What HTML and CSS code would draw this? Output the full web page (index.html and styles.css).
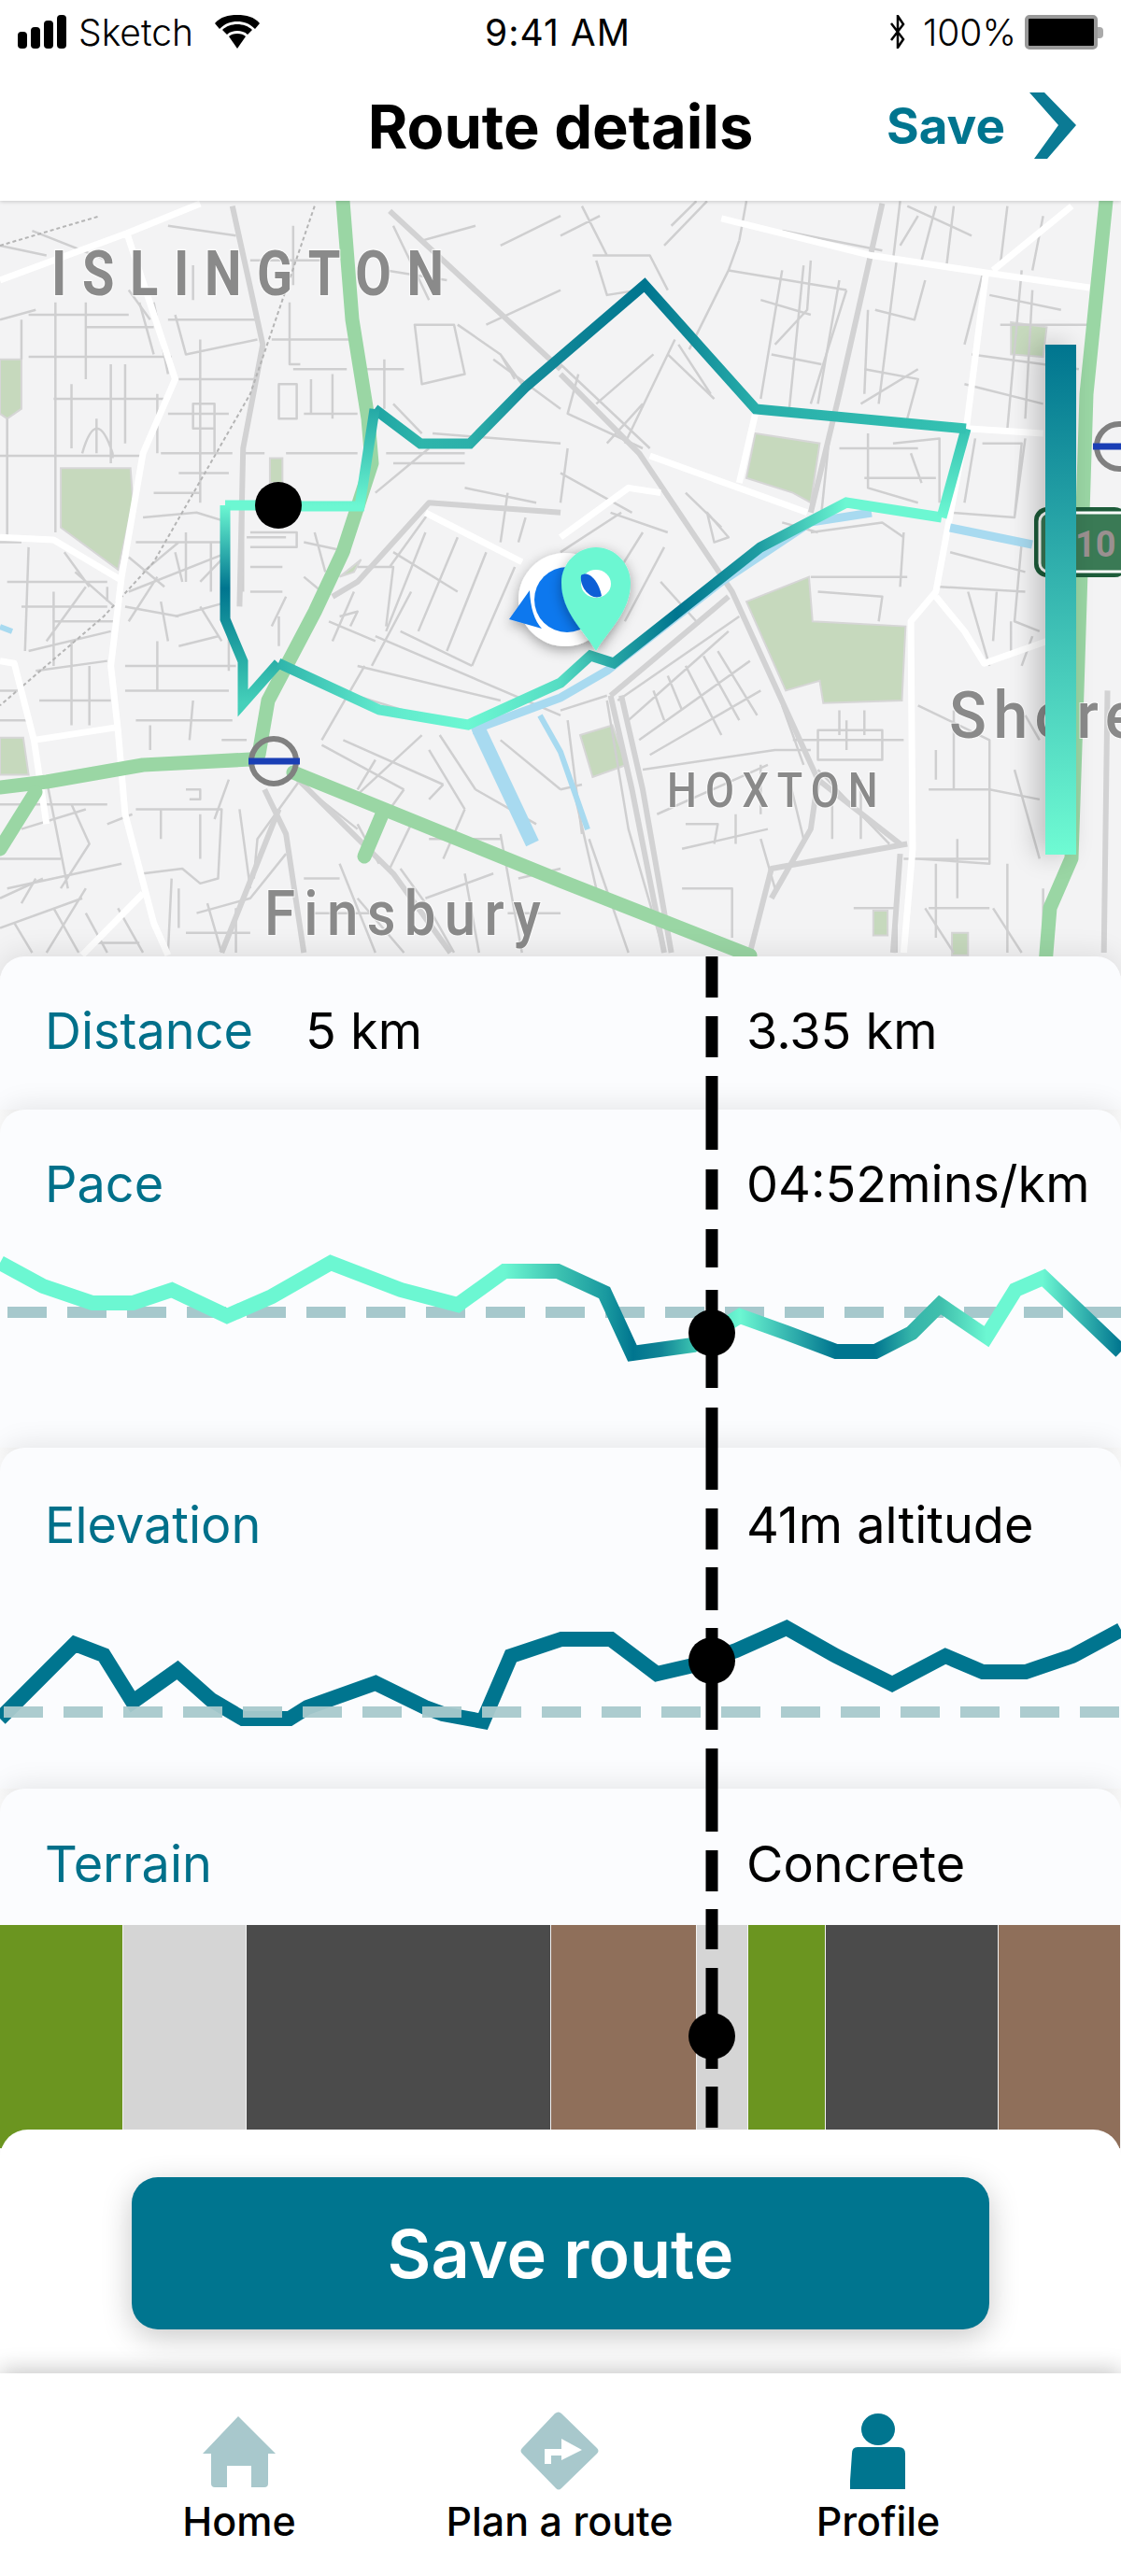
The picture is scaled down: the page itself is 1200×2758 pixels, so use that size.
FILE: index.html
```html
<!DOCTYPE html>
<html lang="en">
<head>
<meta charset="utf-8">
<title>Route details</title>
<link rel="stylesheet" href="styles.css">
</head>
<body>
<div class="screen">
  <header class="top">
    <div class="status">
      <div class="status-left">
        <div class="signal"><i class="b1"></i><i class="b2"></i><i class="b3"></i><i class="b4"></i></div>
        <span>Sketch</span>
        <svg class="wifi" viewBox="0 0 48 36"><path d="M0 9C6 2 14 0 24 0s18 2 24 9l-5 6C37 9 31 7 24 7S11 9 5 15z"/><path d="M8 16c4-4 10-6 16-6s12 2 16 6l-5 5c-3-3-7-4-11-4s-8 1-11 4z"/><path d="M15 23c2-2 5-3 9-3s7 1 9 3l-9 13z"/></svg>
      </div>
      <div class="status-mid">9:41 AM</div>
      <div class="status-right">
        <svg class="bt" viewBox="0 0 18 36"><path d="M2 9l13 17-6 9V1l6 9L2 27"/></svg>
        <span>100%</span>
        <div class="battery"><i></i></div>
      </div>
    </div>
    <div class="navbar">
      <div></div>
      <h1>Route details</h1>
      <div class="save">
        <span>Save</span>
        <svg class="chev" viewBox="0 0 50 72"><polygon points="0,0 16,0 50,35 19,71 5,71 31,35"/></svg>
      </div>
    </div>
  </header>

  <section class="map">
    <svg class="map-svg" viewBox="0 215 1200 830">
      <defs>
        <linearGradient id="gV1" gradientUnits="userSpaceOnUse" x1="0" y1="541" x2="0" y2="753">
          <stop offset="0" stop-color="#6cf7d2"/><stop offset=".42" stop-color="#00758f"/><stop offset=".8" stop-color="#2bb1a8"/><stop offset="1" stop-color="#45d0ba"/>
        </linearGradient>
        <linearGradient id="gH1" gradientUnits="userSpaceOnUse" x1="298" y1="0" x2="1008" y2="0">
          <stop offset="0" stop-color="#2fb5ab"/><stop offset=".15" stop-color="#5fe8cc"/><stop offset=".285" stop-color="#6cf7d2"/><stop offset=".425" stop-color="#55dcc3"/><stop offset=".5" stop-color="#28a8a6"/><stop offset=".6" stop-color="#00758f"/><stop offset=".725" stop-color="#1f9da2"/><stop offset=".855" stop-color="#6cf7d2"/><stop offset="1" stop-color="#6cf7d2"/>
        </linearGradient>
        <linearGradient id="gV2" gradientUnits="userSpaceOnUse" x1="0" y1="554" x2="0" y2="459">
          <stop offset="0" stop-color="#6cf7d2"/><stop offset="1" stop-color="#35c2b2"/>
        </linearGradient>
        <linearGradient id="gH2" gradientUnits="userSpaceOnUse" x1="401" y1="0" x2="1034" y2="0">
          <stop offset="0" stop-color="#1fa4a3"/><stop offset=".08" stop-color="#2eb5ab"/><stop offset=".16" stop-color="#2cb0aa"/><stop offset=".26" stop-color="#158c9a"/><stop offset=".457" stop-color="#00758f"/><stop offset=".645" stop-color="#28aeaa"/><stop offset="1" stop-color="#35c2b2"/>
        </linearGradient>
        <linearGradient id="gV3" gradientUnits="userSpaceOnUse" x1="0" y1="438" x2="0" y2="542">
          <stop offset="0" stop-color="#25a9a6"/><stop offset="1" stop-color="#6cf7d2"/>
        </linearGradient>
        <filter id="soft" x="-30%" y="-30%" width="160%" height="160%"><feDropShadow dx="0" dy="4" stdDeviation="7" flood-color="#000" flood-opacity=".35"/></filter>
      </defs>

      <rect class="ground" x="0" y="215" width="1200" height="830"/>

      <!-- left half, drawn in a 1568-wide sketch grid -->
      <g transform="translate(0 210) scale(.3827 .5294)">
        <path class="park" d="M170 550H365L372 620 330 755 170 670Z"/>
        <path class="park" d="M0 330H60V430L20 450 0 440Z"/>
        <path class="park" d="M0 1095H65L80 1170H0Z"/>
        <path class="park" d="M755 530H790V580H755Z"/>
        <path class="park" d="M950 770L1010 735 990 760Z"/>
        <path class="street" d="M155 215V680M80 325H480M150 410H460M20 450V690M0 525H400M230 520Q270 420 315 520V530M240 215V370M310 340V540M80 240H360M240 265H430M430 215L470 360M470 250H720M490 240L520 320 720 290M500 370H720M560 290V620M540 420H600V470H540ZM450 520H650M760 290H980M810 215V340H840M780 380H830V450H780ZM870 370V440M930 360V450M850 440H1000M820 350H970M680 520H740M800 520H1000M1075 330V430M1000 350H1130M1160 260H1270L1300 360 1180 380ZM1280 260L1400 320 1470 390M1100 420L1180 480M1080 520H1300M1360 260L1568 190M1400 100L1568 40M1180 90L1330 60M1080 150L1250 170M1100 60L1200 210M1380 330L1568 430M1400 320L1440 370M540 140V210M700 130H900M470 60L660 80M820 60V180M90 70L300 130M0 100L130 120M360 190L420 250"/>
        <path class="street" d="M0 700H60M80 710L70 920M150 800V950M240 790L130 900M20 780H300M60 830H300M150 860H330M80 920L310 880M180 720L250 790M300 790V820M210 760L320 830M440 770L360 860M350 830L500 850M490 850L640 820M510 780L490 720M640 720L360 800M690 690H800M700 750H790M850 700L980 720M880 680L910 760M780 850V910M640 720L560 780M350 1000H640M350 950H660M440 900L440 1000M620 1000L520 1000M380 1060H650M420 1070V1120M540 1020L530 1100M620 1100H690M350 1150H700M520 1200H560V1220H530M380 1240H620L610 1380 560 1390 510 1360 400 1370M200 1230L250 1310 170 1400M0 1230H300M60 1280L240 1240M130 1180L190 1400M0 1340L170 1340M20 1400L340 1350M100 1380L60 1430M0 1480L230 1420M270 1510H390M330 1440L400 1530M130 1530L240 1400"/>
        <path class="street" d="M990 800L930 900M1000 750H1100L1080 870M1090 750L1200 640M920 860L1050 900M1100 720L1280 800M1190 680L1080 880M1280 690L1170 880M1360 720L1250 920M1440 750L1320 950M1050 890L1568 1050M1000 950L1400 1020M1120 880L1320 950M950 1000L1130 1040M1020 950L900 1100M1150 800L1040 950M1180 1090L1000 1210M900 1110L1130 1200M960 1100L1240 1190M1230 1090L1330 1200M1050 1140L1000 1200M1240 1190L1200 1220M1200 1120L1300 1240M1330 1200L1500 1270M1300 1240L1240 1340M1130 1200L1080 1250M1150 1270L1090 1360M1380 1370L1190 1420M1400 1290L1460 1530M1300 1370L1340 1530M1000 1270L1060 1350M860 1200L1000 1280M840 1180L720 1300 710 1380M640 1180L600 1260M480 1380L470 1530M550 1450L700 1420 800 1330M1120 1360L1200 1440 1270 1530M660 1440V1530M520 1490H700"/>
        <path class="street" d="M0 250L100 230M60 250V330M390 215L430 320M200 380V510M350 340V500M270 450V520M440 400V520M470 440H640M600 470V520M500 560H640M430 600H560M400 650L550 640 640 660M380 700H640M400 760L500 700M520 680V780M590 700V800M360 730L460 790M450 820L470 900M560 830L620 900M500 910L610 890M640 850V960M700 680H830V710H700M700 800H790M760 870L800 810M680 600V800M950 850L1000 840 980 870M850 770L900 800M1050 600L1200 510M1100 540H1300M1300 590L1500 620M1420 600L1400 700M1470 650L1450 700M1210 480L1568 500M1400 1100L1568 1200M1450 1380L1568 1360M1420 1450H1568M1200 1300H1400M950 1350L1050 1530M850 1380H950M880 1450H1040M1000 1420L1130 1530M0 1420L120 1380M240 1450L300 1530M560 1250V1340M450 1240V1300M670 1240L700 1400M580 1430L620 1530M500 1400V1480M300 1270L370 1250M150 1440L220 1530M40 1470L90 1530M0 1000H50M100 960L300 940M110 1020H310M200 900V1070M250 950V1070M0 1060H80"/>
        <path class="road-grey" d="M650 20L735 300 680 510 670 830M1090 30L1568 350M1568 640L1200 620 1000 780 930 810M740 1200L800 1290 850 1530M820 1170L1100 1370 1260 1530M780 1240L620 1530"/>
        <path class="rail" d="M880 20L700 400 430 740 290 850 0 1030M0 100L280 40"/>
        <path class="road" d="M0 170L355 75 560 15M355 75L490 370 400 520 340 770 310 950 330 1080 350 1250 430 1470 470 1535M0 690L150 695 335 775M0 940L40 945 95 1100 130 1270M95 1100L320 1075M1190 640L1460 740M230 1535L400 1410"/>
      </g>

      <!-- right half -->
      <g transform="translate(600 210) scale(.3827 .5294)">
        <path class="park" d="M545 480L725 500 700 620 650 600 520 570Z"/>
        <path class="park" d="M520 820L695 770 705 860 965 870 955 1020 735 1025 725 980 630 1000Z"/>
        <path class="park" d="M55 1090L145 1070 185 1150 90 1175Z"/>
        <path class="park" d="M1260 255L1360 265 1350 325 1260 320Z"/>
        <path class="park" d="M875 1445H915V1495H875Z"/>
        <path class="park" d="M1095 1490H1140V1535H1095Z"/>
        <path class="street" d="M90 120L250 120 300 190M100 130L130 200 220 190M0 80L110 40M60 20L130 120M310 60L380 10M410 10L290 100M500 90L470 150 800 190M470 150L360 310M800 190L700 420M700 130L690 230 600 300M940 130L890 420M970 20L1150 80M1000 40L950 100M1020 170L990 250 880 230M850 350L1000 370 970 450M840 420L1000 350M1130 300L1180 160M0 340L250 510M50 360L20 440 230 510M100 420L260 320M180 500L320 290M230 420L130 500M300 320L430 410M330 300L420 400M1290 150L1250 470M1200 200L1400 230M1230 260H1480M1150 320L1450 350M1130 380L1350 420M1160 490L1130 620M1180 500H1290L1270 650 1090 640M1300 490L1270 650"/>
        <path class="street" d="M750 500L730 640M780 510H1000M860 480V590L1000 620M930 500L1060 490V620M980 520L1010 580M850 570H1050M0 720L170 640M100 830L230 680M180 860L290 710M280 780L380 860M0 560L200 640M20 510L0 620M140 640L300 680M410 640L470 690 430 700ZM350 600L450 670M620 660L720 680M700 680L900 660 960 690M700 770H970M720 800L900 810 890 860M960 680L950 790M1090 720L1300 760M1060 790L1300 800M1140 800L1200 950M1210 900L1220 800M1290 700L1270 860 1340 880M1260 860V930M1320 890L1290 950"/>
        <path class="street" d="M0 1040L130 1010M20 1060L60 1290M130 1020L190 1280 290 1530M160 1020L500 850M190 1060L470 880M220 1100L530 940M250 1130L560 1000M350 950L450 1090M400 930L500 1060M440 920L550 1050M260 1000L290 1060M300 970L340 1040M230 1160L600 1120 700 1120M270 1250L580 1150M350 1270H440L430 1310M490 1250V1310M340 1400H480V1500M650 1100H960M720 1080H900V1140H720ZM780 1040V1090M850 1040V1090M620 1030L680 1150M720 1160L920 1310M1000 1030L1200 1100V1350L1000 1340M1030 1200H1200M1110 1300V1420M1100 1040V1200M960 1340H1200M820 1440H940V1530M1020 1440L1100 1530M1270 1160L1340 1340M1300 1050L1340 1100M1210 1440L1290 1530"/>
        <path class="street" d="M520 10L500 90M620 150L560 410M680 140L640 430M780 170L720 420M560 210L700 240M590 320L730 340M860 230L850 400M620 70L900 110M950 10L930 130M1050 20L1010 130M1100 20L1080 140M1250 20L1230 140M1350 40L1320 150M1320 190L1300 450M800 1060V1120M560 1150V1250M640 1180L680 1300M340 1320L580 1280M560 1300L600 1400M760 1200V1300M840 1180V1300M1050 1120V1180M1200 1200L1340 1220M1250 1350V1530M1350 1400V1530M1050 1350V1500M1030 1440H1200M30 1180L100 1400M80 1300L190 1530M0 1200L60 1190"/>
        <path class="road-grey" d="M0 360L220 520 480 800 720 1180 950 1310M900 15L780 400 700 640M140 1010L200 1200 290 1530M170 1010L230 1200 310 1530M470 810L140 1010M970 1310L590 1360 530 1530M950 1330L930 1530M720 1180L700 1280 590 1420M1530 1000L1520 1530"/>
        <path class="road" d="M450 45L870 120 1190 155 1480 185M1190 155L1135 470 1050 800 980 860 985 1320 960 1530M1050 810L1130 880 1185 945 1360 900M1135 470L1350 480M545 440L500 580M250 525L690 640M0 690L190 590 280 600M1210 150L1430 20"/>
      </g>

      <path class="water w-main" d="M513 782L570 903"/>
      <path class="water w-thin" d="M578 766L600 805 629 888"/>
      <path class="water w-mid" d="M505 782L600 747 650 718 772 623 868 559 933 549"/>
      <path class="water w-mid" d="M1017 565L1105 583"/>
      <path class="water w-thin" d="M0 671L13 676"/>

      <g class="cycle">
        <path d="M367 215L377 342 394 448 398 496 367 591 337 655 287 750 277 808"/>
        <path d="M0 843L50 837 153 819 268 813"/>
        <path d="M314 827L600 943 803 1023"/>
        <path d="M38 848L0 909"/>
        <path d="M409 872L390 917"/>
        <path d="M1184 215L1163 422 1153 739 1147 919 1124 972 1118 1045"/>
      </g>

      <text class="label lab-isl" transform="translate(55 316) scale(1 1.18)">ISLINGTON</text>
      <text class="label lab-fin" transform="translate(283 1001) scale(1 1.1)">Finsbury</text>
      <text class="label lab-hox" transform="translate(714 864) scale(1 1.15)">HOXTON</text>
      <text class="label lab-sho" transform="translate(1016 790) scale(1 1.07)">Shore</text>

      <g class="tube">
        <circle cx="293" cy="815" r="24"/>
        <path d="M266 815H321"/>
      </g>
      <g class="tube">
        <circle cx="1198" cy="478" r="24"/>
        <path d="M1170 478H1200"/>
      </g>
      <g class="shield">
        <rect class="s-out" x="1107" y="543" width="100" height="75" rx="14"/>
        <rect class="s-in" x="1113" y="549" width="100" height="63" rx="9"/>
        <text class="s-txt" x="1151" y="596">10</text>
      </g>

      <g class="route">
        <path stroke="#6cf7d2" d="M298 541H241"/>
        <path stroke="url(#gV1)" d="M241 541V663L260 708V753L298 710"/>
        <path stroke="url(#gH1)" d="M298 710L406 760 501 776 600 731 632 702 657 710 814 586 906 538 1008 554"/>
        <path stroke="url(#gV2)" d="M1008 554L1034 459"/>
        <path stroke="url(#gH2)" d="M1034 459L809 438 690 305 563 414 503 475H450L401 438"/>
        <path stroke="url(#gV3)" d="M401 438L385 542H298"/>
      </g>
      <circle cx="298" cy="541" r="25"/>

      <g class="locate" filter="url(#soft)">
        <circle class="loc-white" cx="605" cy="642" r="50"/>
        <circle class="loc-blue" cx="607" cy="642" r="35"/>
        <path class="loc-blue" d="M545 663L567 632Q568 660 580 673Z"/>
      </g>
      <g filter="url(#soft)">
        <path class="pin" d="M638 697C625 675 601 655 601 624 601 603 618 586 638 586S675 603 675 624C675 655 651 675 638 697Z"/>
        <ellipse class="pin-white" cx="638" cy="625" rx="16" ry="15"/>
        <path class="pin-blue" d="M622 616C630 610 641 622 644 638 634 644 620 630 622 616Z"/>
      </g>
    </svg>
    <div class="scale-bar"></div>
  </section>

  <main class="cards">
    <section class="card card-distance">
      <div class="row">
        <span class="key">Distance</span><span class="val">5 km</span><span class="val">3.35 km</span>
      </div>
    </section>

    <section class="card card-pace">
      <div class="row">
        <span class="key">Pace</span><span></span><span class="val">04:52mins/km</span>
      </div>
      <svg class="chart" viewBox="0 1330 1200 130">
        <defs>
          <linearGradient id="gPace" gradientUnits="userSpaceOnUse" x1="0" y1="0" x2="1200" y2="0">
            <stop offset=".45" stop-color="#6cf7d2"/><stop offset=".5" stop-color="#3bc0b0"/><stop offset=".54" stop-color="#1a9aa0"/><stop offset=".565" stop-color="#00758f"/><stop offset=".59" stop-color="#118596"/><stop offset=".62" stop-color="#3dc5b2"/><stop offset=".66" stop-color="#6cf7d2"/><stop offset=".745" stop-color="#00758f"/><stop offset=".78" stop-color="#00758f"/><stop offset=".813" stop-color="#35b5aa"/><stop offset=".84" stop-color="#40c0ad"/><stop offset=".88" stop-color="#6cf7d2"/><stop offset=".93" stop-color="#6cf7d2"/><stop offset="1" stop-color="#00758f"/>
          </linearGradient>
        </defs>
        <path class="avg" d="M8 1405H1200"/>
        <path class="trace trace-pace" d="M0 1352L46 1377 99 1395H142L184 1381 243 1409 291 1388 354 1352 429 1381 490 1397 540 1361H597L647 1384 677 1449 742 1440 792 1409 842 1427 895 1447H937L976 1427 1006 1397 1056 1431 1087 1381 1117 1368 1200 1447"/>
      </svg>
    </section>

    <section class="card card-elev">
      <div class="row">
        <span class="key">Elevation</span><span></span><span class="val">41m altitude</span>
      </div>
      <svg class="chart" viewBox="0 1725 1200 130">
        <path class="trace trace-elev" d="M0 1840L80 1760 111 1772 142 1822 190 1788 226 1820 260 1840H310L329 1828 402 1802 455 1828 474 1835 517 1843 547 1773 601 1755H654L703 1792 742 1783 788 1767 842 1743 895 1773 955 1803 1012 1773 1052 1790H1098L1148 1773 1200 1745"/>
        <path class="avg avg-light" d="M4 1833H1200"/>
      </svg>
    </section>

    <section class="card card-terrain">
      <div class="row">
        <span class="key">Terrain</span><span></span><span class="val">Concrete</span>
      </div>
      <div class="terrain">
        <i class="grass"></i><i class="concrete"></i><i class="tarmac"></i><i class="dirt"></i><i class="concrete"></i><i class="grass"></i><i class="tarmac"></i><i class="dirt"></i>
      </div>
    </section>
    <svg class="scrubber" viewBox="0 1024 40 1256">
      <line x1="20" y1="1024" x2="20" y2="1068"/><line x1="20" y1="1088" x2="20" y2="1132"/><line x1="20" y1="1152" x2="20" y2="1231"/><line x1="20" y1="1252" x2="20" y2="1295"/><line x1="20" y1="1316" x2="20" y2="1357"/><line x1="20" y1="1381" x2="20" y2="1486"/><line x1="20" y1="1507" x2="20" y2="1595"/><line x1="20" y1="1615" x2="20" y2="1659"/><line x1="20" y1="1678" x2="20" y2="1724"/><line x1="20" y1="1743" x2="20" y2="1852"/><line x1="20" y1="1872" x2="20" y2="1961"/><line x1="20" y1="1981" x2="20" y2="2025"/><line x1="20" y1="2044" x2="20" y2="2087"/><line x1="20" y1="2107" x2="20" y2="2215"/><line x1="20" y1="2234" x2="20" y2="2278"/>
      <circle cx="20" cy="1427" r="25"/><circle cx="20" cy="1778" r="25"/><circle cx="20" cy="2180" r="25"/>
    </svg>
  </main>

  <section class="action">
    <button class="primary">Save route</button>
  </section>

  <nav class="tabs">
    <div class="tab tab-home">
      <svg viewBox="0 0 78 76"><path d="M38 0L78 40H70V72Q70 76 66 76H52V53H26V76H13Q9 76 9 72V40H0Z"/></svg>
      <span>Home</span>
    </div>
    <div class="tab tab-plan">
      <svg viewBox="0 0 84 84"><path d="M37 2Q41-1 44 2L82 39Q85 42 82 45L44 82Q41 85 38 82L2 45Q-1 42 2 39Z"/><path class="arrow" d="M26 56V40H44V29L66 41 44 52V47H33V56Z"/></svg>
      <span>Plan a route</span>
    </div>
    <div class="tab tab-profile">
      <svg viewBox="0 0 60 81"><ellipse cx="30" cy="17" rx="18" ry="17"/><path d="M8 36H52Q59 36 59 43V81H0V72L2 43Q2 36 8 36Z"/></svg>
      <span>Profile</span>
    </div>
  </nav>
</div>
</body>
</html>
```

FILE: styles.css
```css
* { box-sizing: border-box; }
html, body { margin: 0; padding: 0; background: #fff; }
body { font-family: Inter, "Noto Sans", sans-serif; color: #000; }
.screen { width: 1200px; height: 2758px; overflow: hidden; position: relative; display: flex; flex-direction: column; }

/* header */
.top { height: 215px; background: #fff; position: relative; z-index: 3; box-shadow: 0 1px 4px rgba(0,0,0,.18); flex: none; }
.status { height: 68px; display: grid; grid-template-columns: 1fr auto 1fr; align-items: center; padding: 0 25px 0 19px; font-size: 39px; font-weight: 300; }
.status-left { display: flex; align-items: center; gap: 13px; }
.status-left .wifi { margin-left: 10px; }
.status-mid { letter-spacing: 1px; font-weight: 400; }
.status-right { display: flex; align-items: center; justify-content: flex-end; gap: 9px; }
.signal { display: flex; align-items: flex-end; gap: 4px; height: 36px; }
.signal i { display: block; width: 10px; background: #000; border-radius: 4px; }
.signal .b1 { height: 18px; } .signal .b2 { height: 23px; } .signal .b3 { height: 30px; } .signal .b4 { height: 36px; }
.wifi { width: 48px; height: 36px; fill: #000; }
.bt { width: 18px; height: 36px; fill: none; stroke: #000; stroke-width: 2.5; margin-right: 9px; }
.battery { width: 78px; height: 37px; border: 4px solid #999; border-radius: 5px; background: #000; position: relative; }
.battery i { position: absolute; right: -10px; top: 9px; width: 6px; height: 12px; background: #aaa; border-radius: 0 4px 4px 0; }
.navbar { height: 135px; display: grid; grid-template-columns: 1fr auto 1fr; align-items: center; padding-bottom: 1px; }
.navbar h1 { margin: 0; font-size: 65px; font-weight: 700; line-height: 1; letter-spacing: 0; padding-top: 1px; }
.save { display: flex; align-items: center; justify-content: flex-end; gap: 26px; padding-right: 48px; color: #00758f; font-size: 53px; font-weight: 700; }
.chev { width: 50px; height: 72px; fill: #0b7a94; }

/* map */
.map { height: 830px; margin-bottom: -21px; position: relative; z-index: 0; flex: none; }
.map-svg { display: block; width: 1200px; height: 830px; }
.ground { fill: #f3f3f4; }
.park { fill: #c6d9bd; stroke: #d6d6d6; stroke-width: 2; vector-effect: non-scaling-stroke; }
.street, .road, .road-grey, .rail { fill: none; vector-effect: non-scaling-stroke; stroke-linejoin: round; }
.street { stroke: #cfcfd0; stroke-width: 2.5; }
.road-grey { stroke: #d2d2d3; stroke-width: 6; }
.road { stroke: #fff; stroke-width: 7; }
.rail { stroke: #b5b5b5; stroke-width: 2; stroke-dasharray: 4 3; }
.water { fill: none; stroke: #a8daf0; }
.w-main { stroke-width: 15; }
.w-thin { stroke-width: 6; }
.w-mid { stroke-width: 9; }
.cycle path { fill: none; stroke: #9ad6a4; stroke-width: 15; stroke-linecap: round; stroke-linejoin: round; }
.label { fill: #8a8a8a; font-family: Roboto, sans-serif; stroke: rgba(255,255,255,.7); stroke-width: 2px; paint-order: stroke; }
.lab-isl { font-size: 56px; font-weight: 700; letter-spacing: 16.6px; }
.lab-fin { font-size: 60px; font-weight: 500; letter-spacing: 9.3px; }
.lab-hox { font-size: 45px; font-weight: 500; letter-spacing: 9px; }
.lab-sho { font-size: 66px; font-weight: 500; letter-spacing: 7.5px; }
.tube circle { fill: none; stroke: #808080; stroke-width: 6; }
.tube path { fill: none; stroke: #1a3fb5; stroke-width: 7; }
.s-out { fill: #1d5c3a; }
.s-in { fill: #3a7a55; stroke: #fff; stroke-width: 3; }
.s-txt { fill: #9a9090; font-family: Roboto, sans-serif; font-weight: 700; font-size: 38px; }
.route path { fill: none; stroke-width: 11; stroke-linejoin: miter; }
.loc-white { fill: #fff; }
.loc-blue { fill: #0d78ee; }
.pin { fill: #6cf7d2; }
.pin-white { fill: #fff; }
.pin-blue { fill: #0a5fd6; }
.scale-bar { position: absolute; left: 1119px; top: 154px; width: 33px; height: 546px; background: linear-gradient(#00758f, #6ffbd3); box-shadow: -10px 0 28px rgba(0,0,0,.22); }

/* cards */
.cards { position: relative; z-index: 1; flex: none; display: flex; flex-direction: column; }
.card { background: #fbfcfe; border-radius: 26px 26px 0 0; box-shadow: 0 -4px 30px rgba(0,0,0,.09); position: relative; overflow: hidden; }
.card-distance { height: 164px; padding-top: 50px; }
.card-pace { height: 362px; padding-top: 50px; }
.card-elev { height: 365px; padding-top: 53px; }
.card-terrain { height: 385px; padding-top: 51px; }
.row { display: grid; grid-template-columns: 279px 472px 1fr; padding-left: 48px; line-height: 60px; font-size: 54px; white-space: nowrap; }
.key { color: #00708a; }
.val { color: #000; }
.chart { display: block; width: 1200px; height: 130px; }
.card-pace .chart { margin-top: 32px; }
.card-elev .chart { margin-top: 62px; }
.avg { fill: none; stroke: #a6c8cc; stroke-width: 12; stroke-dasharray: 42 22; }
.avg-light { stroke: #a8c9cc; opacity: .95; }
.trace { fill: none; stroke-width: 16; stroke-linejoin: miter; }
.trace-pace { stroke: url(#gPace); }
.trace-elev { stroke: #00758f; }
.terrain { position: absolute; left: 0; right: 0; top: 146px; height: 239px; display: grid; grid-template-columns: 132px 132px 326px 156px 55px 83px 185px 131px; }
.terrain i { display: block; border-right: 1px solid #f4f4f4; }
.grass { background: #6b9520; }
.concrete { background: #d5d5d5; }
.tarmac { background: #4b4b4b; }
.dirt { background: #8f6f5a; }
.scrubber { position: absolute; left: 742px; top: 0; width: 40px; height: 1256px; overflow: visible; z-index: 2; }
.scrubber line { stroke: #000; stroke-width: 13; }
.scrubber circle { fill: #000; }

/* action panel */
.action { height: 261px; margin-top: -20px; background: #fff; border-radius: 30px 30px 0 0; position: relative; z-index: 3; padding-top: 51px; display: flex; justify-content: center; flex: none; }
.primary { width: 918px; height: 163px; border: 0; border-radius: 28px; background: #00758f; color: #fff; font-family: inherit; font-size: 72px; font-weight: 600; box-shadow: 0 8px 32px rgba(0,0,0,.22); }

/* tabs */
.tabs { height: 217px; flex: none; background: #fff; position: relative; z-index: 4; box-shadow: 0 -4px 22px rgba(0,0,0,.22); }
.tab { position: absolute; top: 0; display: flex; flex-direction: column; align-items: center; }
.tab span { font-size: 43px; font-weight: 500; line-height: 50px; white-space: nowrap; position: absolute; top: 133px; }
.tab svg { position: absolute; }
.tab-home { left: 256px; }
.tab-home svg { width: 78px; height: 76px; top: 46px; fill: #a8c8cc; }
.tab-plan { left: 599px; }
.tab-plan svg { width: 84px; height: 84px; top: 41px; fill: #a8c8cc; }
.tab-plan .arrow { fill: #fff; }
.tab-profile { left: 940px; }
.tab-profile svg { width: 60px; height: 81px; top: 43px; fill: #00758f; }
```
